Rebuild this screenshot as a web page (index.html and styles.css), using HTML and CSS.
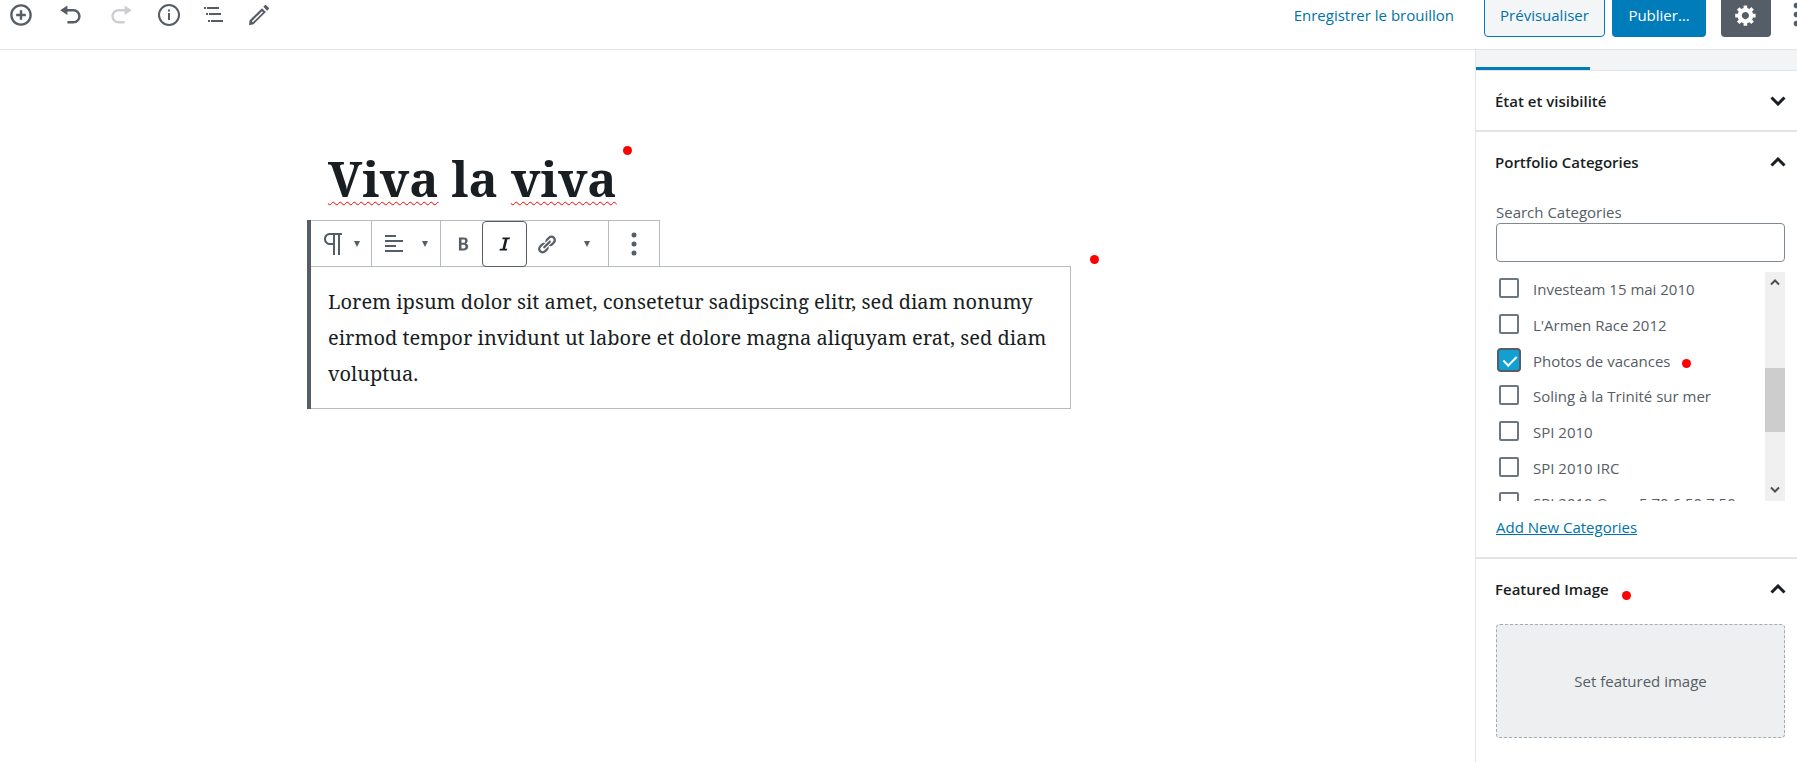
FILE: index.html
```html
<!DOCTYPE html>
<html lang="fr">
<head>
<meta charset="utf-8">
<title>Viva la viva</title>
<link rel="stylesheet" href="styles.css">
</head>
<body>
<header class="topbar">
  <div class="tools">
    <button class="tool tool-wide" aria-label="Ajouter un bloc"><svg viewBox="0 0 20 20"><path d="M10 1c-5 0-9 4-9 9s4 9 9 9 9-4 9-9-4-9-9-9zm0 16c-3.900 0-7-3.100-7-7s3.100-7 7-7 7 3.100 7 7-3.100 7-7 7zm1-11H9v3H6v2h3v3h2v-3h3V9h-3V6z"/></svg></button>
    <button class="tool tool-wide" aria-label="Annuler"><svg viewBox="0 0 20 20"><path d="M12 5H7V2L1 6l6 4V7h5c2.200 0 4 1.800 4 4s-1.800 4-4 4H7v2h5c3.300 0 6-2.700 6-6s-2.700-6-6-6z"/></svg></button>
    <button class="tool tool-wide" aria-label="Rétablir" disabled><svg viewBox="0 0 20 20"><path d="M8 5h5V2l6 4-6 4V7H8c-2.200 0-4 1.800-4 4s1.800 4 4 4h5v2H8c-3.300 0-6-2.700-6-6s2.700-6 6-6z"/></svg></button>
    <button class="tool" aria-label="Structure du contenu"><svg viewBox="0 0 24 24"><path d="M11 10h2v7h-2zM11 6.500h2v2h-2z"/><circle cx="12" cy="12" r="10" fill="none" stroke="currentColor" stroke-width="2"/></svg></button>
    <button class="tool" aria-label="Navigation des blocs"><svg viewBox="0 0 24 24"><path d="M2 4h2v2H2zM5 4h12v2H5zM4 10h2v2H4zM7 10h12v2H7zM6 17h2v2H6zM9 17h12v2H9z"/></svg></button>
    <button class="tool" aria-label="Modifier"><svg viewBox="0 0 20 20"><path d="M13.600 3.200l1.300-1.300c.3-.3.800-.3 1.100 0l2.100 2.100c.3.3.3.800 0 1.100l-1.300 1.300zM12.500 4.300l3.200 3.200L5.500 17.700l-3.800.8.400-4zm0 2.500L4 15.200l.9.900 8.500-8.400z" fill-rule="evenodd"/></svg></button>
  </div>
  <div class="actions">
    <button class="draft">Enregistrer le brouillon</button>
    <button class="btn preview">Prévisualiser</button>
    <button class="btn publish">Publier…</button>
    <button class="btn gear" aria-label="Réglages"><svg viewBox="0 0 20 20"><path fill-rule="evenodd" d="M18 12h-2.180c-.17.700-.44 1.350-.81 1.930l1.540 1.540-2.100 2.100-1.540-1.540c-.58.360-1.230.630-1.910.790V19H8v-2.180c-.68-.16-1.330-.43-1.910-.79l-1.540 1.540-2.120-2.120 1.540-1.540c-.36-.58-.63-1.230-.79-1.910H1V9.030h2.170c.16-.7.440-1.350.8-1.940L2.430 5.550l2.100-2.100 1.540 1.540c.58-.37 1.240-.64 1.930-.81V2h3v2.180c.68.160 1.330.430 1.910.790l1.540-1.540 2.120 2.120-1.540 1.540c.36.590.64 1.240.8 1.940H18V12zm-8.500 1.500c1.660 0 3-1.340 3-3s-1.340-3-3-3-3 1.340-3 3 1.340 3 3 3z"/></svg></button>
    <button class="more" aria-label="Plus d’outils"><svg viewBox="0 0 8 24"><circle cx="4" cy="4" r="2.500"/><circle cx="4" cy="12" r="2.500"/><circle cx="4" cy="20" r="2.500"/></svg></button>
  </div>
</header>
<div class="layout">
  <main class="editor">
    <div class="column">
      <h1 class="title"><span class="typo">Viva</span> la <span class="typo">viva</span><i class="dot dot-title"></i></h1>
      <section class="block">
        <div class="toolbar">
          <div class="group">
            <button class="tb tb-type" aria-label="Paragraphe"><svg class="ico-para" viewBox="0 0 20 24"><path d="M7 1h12v2h-2v20h-2V3h-3v20h-2V13H7C3.500 13 1 10.500 1 7s2.500-6 6-6zm3 2H7C4.500 3 3 4.800 3 7s1.500 4 4 4h3z" fill-rule="evenodd"/></svg><span class="arrow"></span></button>
          </div>
          <div class="group">
            <button class="tb tb-align" aria-label="Alignement"><svg class="ico-align" viewBox="0 0 18 18"><path d="M0 0h11v2H0zM0 5h18v2H0zM0 10h11v2H0zM0 15h18v2H0z"/></svg><span class="arrow"></span></button>
          </div>
          <div class="group">
            <button class="tb tb-bold" aria-label="Gras"><svg class="ico-text" viewBox="0 0 12 14"><path fill-rule="evenodd" d="M1 0h5.500C9.300 0 10.500 1.300 10.500 3.500c0 1.500-.7 2.500-1.800 3 1.500.4 2.300 1.500 2.300 3.300C11 12.500 9.500 14 6.500 14H1zm2.800 2.200v3.500h2.300c1.200 0 1.700-.6 1.700-1.800s-.5-1.700-1.800-1.700zm0 5.600v4h2.500c1.300 0 1.900-.7 1.900-2s-.6-2-1.900-2z"/></svg></button>
            <button class="tb tb-on" aria-label="Italique" aria-pressed="true"><svg class="ico-text" viewBox="0 0 12 14"><path d="M4 0h8l-.4 1.800H9.200L6.700 12.200H9L8.600 14H.5l.4-1.800h2.900L6.300 1.800H3.600z"/></svg></button>
            <button class="tb tb-link" aria-label="Lien"><svg class="ico-link" viewBox="0 0 20 20"><path d="M17.740 2.760c1.680 1.690 1.680 4.410 0 6.100l-1.530 1.520c-1.120 1.120-2.700 1.470-4.140 1.090l2.620-2.610.76-.77.76-.76c.84-.84.84-2.200 0-3.040-.84-.85-2.200-.85-3.040 0l-.77.76-3.380 3.380c-.37-1.440-.02-3.020 1.100-4.140l1.520-1.530c1.690-1.680 4.420-1.680 6.100 0zM8.590 13.430l5.340-5.340c.42-.42.42-1.100 0-1.520-.44-.43-1.130-.39-1.530 0l-5.330 5.340c-.42.42-.42 1.100 0 1.520.44.430 1.130.390 1.520 0zm-.76 2.290l4.140-4.150c.38 1.440.03 3.020-1.090 4.140l-1.520 1.530c-1.690 1.680-4.410 1.680-6.100 0-1.680-1.680-1.680-4.420 0-6.100l1.530-1.520c1.120-1.120 2.700-1.470 4.140-1.100l-4.140 4.150c-.85.840-.85 2.200 0 3.050.840.840 2.200.840 3.040 0z"/></svg></button>
            <button class="tb tb-drop" aria-label="Plus de mises en forme"><span class="arrow"></span></button>
          </div>
          <div class="group">
            <button class="tb tb-menu" aria-label="Plus d’options"><svg class="ico-dots" viewBox="0 0 6 24"><circle cx="3" cy="3" r="2.500"/><circle cx="3" cy="12" r="2.500"/><circle cx="3" cy="21" r="2.500"/></svg></button>
          </div>
        </div>
        <p class="para">Lorem ipsum dolor sit amet, consetetur sadipscing elitr, sed diam nonumy eirmod tempor invidunt ut labore et dolore magna aliquyam erat, sed diam voluptua.<i class="dot dot-block"></i></p>
      </section>
    </div>
  </main>
  <aside class="sidebar">
    <div class="tabs"><div class="tab-active"></div></div>
    <section class="panel">
      <h2><button class="panel-head">État et visibilité<svg viewBox="0 0 16 10"><path d="M1.500 1.500L8 8l6.500-6.500"/></svg></button></h2>
    </section>
    <section class="panel">
      <h2><button class="panel-head">Portfolio Categories<svg viewBox="0 0 16 10"><path d="M1.500 8.500L8 2l6.500 6.500"/></svg></button></h2>
      <div class="panel-body">
        <label class="search-label" for="search">Search Categories</label>
        <input class="search" id="search" type="text">
        <div class="list-wrap">
          <div class="list">
            <label class="row"><input type="checkbox">Investeam 15 mai 2010</label>
            <label class="row"><input type="checkbox">L'Armen Race 2012</label>
            <label class="row"><input type="checkbox" checked><span class="anchor">Photos de vacances<i class="dot dot-row"></i></span></label>
            <label class="row"><input type="checkbox">Soling à la Trinité sur mer</label>
            <label class="row"><input type="checkbox">SPI 2010</label>
            <label class="row"><input type="checkbox">SPI 2010 IRC</label>
            <label class="row"><input type="checkbox">SPI 2010 Open 5.70 6.50 7.50</label>
          </div>
          <div class="scroll"><svg viewBox="0 0 10 6"><path d="M1 5l4-4 4 4"/></svg><div class="thumb"></div><svg viewBox="0 0 10 6"><path d="M1 1l4 4 4-4"/></svg></div>
        </div>
        <a class="add" href="#">Add New Categories</a>
      </div>
    </section>
    <section class="panel">
      <h2><button class="panel-head"><span class="anchor">Featured Image<i class="dot dot-featured"></i></span><svg viewBox="0 0 16 10"><path d="M1.500 8.500L8 2l6.500 6.500"/></svg></button></h2>
      <div class="panel-body"><button class="featured">Set featured image</button></div>
    </section>
  </aside>
</div>
</body>
</html>
```
FILE: styles.css
```css
* { box-sizing: border-box; }
html, body { height: 100%; }
body {
  margin: 0;
  display: flex;
  flex-direction: column;
  overflow: hidden;
  background: #fff;
  color: #555d66;
  font: 15px/20px "Segoe UI", "Open Sans", "Noto Sans", sans-serif;
}
button { font: inherit; color: inherit; background: none; border: 0; padding: 0; margin: 0; }
svg { display: block; fill: currentColor; }
h1, h2, p { margin: 0; }

.topbar {
  flex: none;
  display: flex;
  justify-content: space-between;
  align-items: center;
  height: 68px;
  margin-top: -18px;
  padding-bottom: 2px;
  border-bottom: 1px solid #e2e4e7;
}
.tools { display: flex; margin-left: -4px; }
.tool { width: 45px; display: flex; justify-content: center; }
.tool-wide { width: 50px; }
.tool svg { width: 24px; height: 24px; }
.tool:disabled { color: #ccced1; }
.actions { display: flex; align-items: center; margin-right: -4px; }
.draft { color: #0073aa; margin-right: 30px; }
.btn { height: 45px; border-radius: 4px; display: flex; align-items: center; justify-content: center; }
.preview { width: 121px; border: 1px solid #007cba; background: #f3f5f6; color: #0073aa; margin-right: 7px; }
.publish { width: 94px; background: #007cba; color: #fff; margin-right: 15px; }
.gear { width: 50px; background: #555d66; color: #fff; margin-right: 21px; }
.gear svg { width: 24px; height: 24px; }
.more svg { width: 9px; height: 27px; }

.layout { flex: 1; display: flex; min-height: 0; }
.editor { flex: 1; padding: 0 97px 0 0; }
.column { width: 764px; max-width: 100%; margin: 0 auto; padding-top: 93px; }
.title {
  position: relative;
  width: max-content;
  margin: 0 0 7px 21px;
  color: #191e23;
  font: 700 49px/70px "Noto Serif", "DejaVu Serif Condensed", serif;
}
.typo { text-decoration: underline wavy #f00 1px; text-underline-offset: 4px; text-decoration-skip-ink: none; }
.block { border-left: 4px solid #555d66; }
.toolbar { display: flex; width: max-content; height: 46px; border: 1px solid #b5bcc2; border-width: 1px 1px 0 0; }
.group { display: flex; border-left: 1px solid #b5bcc2; }
.group:first-child { border-left: 0; }
.tb { display: flex; align-items: center; justify-content: center; height: 46px; }
.tb-type { width: 60px; gap: 11px; }
.tb-align { width: 68px; gap: 19px; }
.tb-bold { width: 41px; padding-left: 4px; }
.tb-on { position: relative; width: 45px; border: 1px solid #555d66; border-radius: 4px; color: #191e23; z-index: 1; }
.tb-link { width: 39px; }
.tb-drop { width: 42px; }
.tb-menu { width: 50px; }
.arrow { border: 3px solid transparent; border-top: 6px solid currentColor; border-bottom: 0; }
.ico-para { width: 20px; height: 24px; }
.ico-align { width: 18px; height: 18px; }
.ico-text { width: 11px; height: 14px; }
.ico-link { width: 21px; height: 21px; }
.ico-dots { width: 6px; height: 24px; }
.para {
  position: relative;
  border: 1px solid #b5bcc2;
  border-left: 0;
  padding: 17px 20px 16px 17px;
  color: #191e23;
  font: 20px/36px "Noto Serif", "DejaVu Serif Condensed", serif;
}
.dot { position: absolute; width: 9px; height: 9px; border-radius: 50%; background: #f00; }
.dot-title { left: 295px; top: 3px; }
.dot-block { right: -29px; top: -12px; }
.dot-row { left: 100%; margin-left: 12px; top: 8px; }
.dot-featured { left: 100%; margin-left: 13px; top: 12px; }
.anchor { position: relative; }

.sidebar { width: 322px; border-left: 1px solid #e2e4e7; }
.tabs { height: 21px; background: #f3f4f5; border-bottom: 1px solid #e2e4e7; display: flex; align-items: flex-end; }
.tab-active { width: 114px; height: 3px; background: #007cba; }
.panel { border-bottom: 2px solid #e2e4e7; }
.panel:last-child { border-bottom: 0; }
.panel h2 { font-size: 15px; }
.panel-head {
  width: 100%;
  height: 59px;
  padding: 1px 11px 0 19px;
  display: flex;
  align-items: center;
  justify-content: space-between;
  color: #191e23;
  font-weight: 600;
}
.panel-head svg { width: 16px; height: 10px; fill: none; stroke: currentColor; stroke-width: 3; }
.panel-body { padding: 0 12px 20px 20px; }
.search-label { display: block; padding: 11px 0 1px; line-height: 20px; }
.search { display: block; width: 100%; height: 39px; border: 1px solid #7e8993; border-radius: 4px; }
.list-wrap { display: flex; height: 229px; margin-top: 10px; }
.list { flex: 1; overflow: hidden; padding-top: 1px; }
.row { display: flex; align-items: center; gap: 14px; height: 36px; padding: 0 0 4px 3px; white-space: nowrap; }
.row:nth-child(3n) { height: 35px; padding-bottom: 3px; }
.row input {
  appearance: none;
  flex: none;
  width: 20px;
  height: 20px;
  margin: 0 0 2px;
  border: 2px solid #6c7781;
  border-radius: 2px;
}
.row input:checked {
  border: 0;
  background: #11a0d2;
  box-shadow: 0 0 0 2px #555d66;
}
.row input:checked::before {
  content: "";
  display: block;
  width: 6px;
  height: 11px;
  margin: 3px 7px;
  border: solid #fff;
  border-width: 0 2px 2px 0;
  transform: rotate(45deg);
}
.scroll { width: 20px; background: #f0f0f0; display: grid; grid-template-rows: 96px 64px 1fr; justify-items: center; padding-bottom: 8px; }
.scroll svg { width: 10px; height: 7px; margin-top: 7px; fill: none; stroke: #505050; stroke-width: 2; }
.scroll svg:last-child { align-self: end; }
.thumb { width: 20px; background: #cdcdcd; }
.add { display: inline-block; margin-top: 16px; color: #0073aa; }
.featured { width: 100%; height: 114px; border: 1px dashed #a2aab2; border-radius: 4px; background: #edeff0; margin-top: 6px; }
```
